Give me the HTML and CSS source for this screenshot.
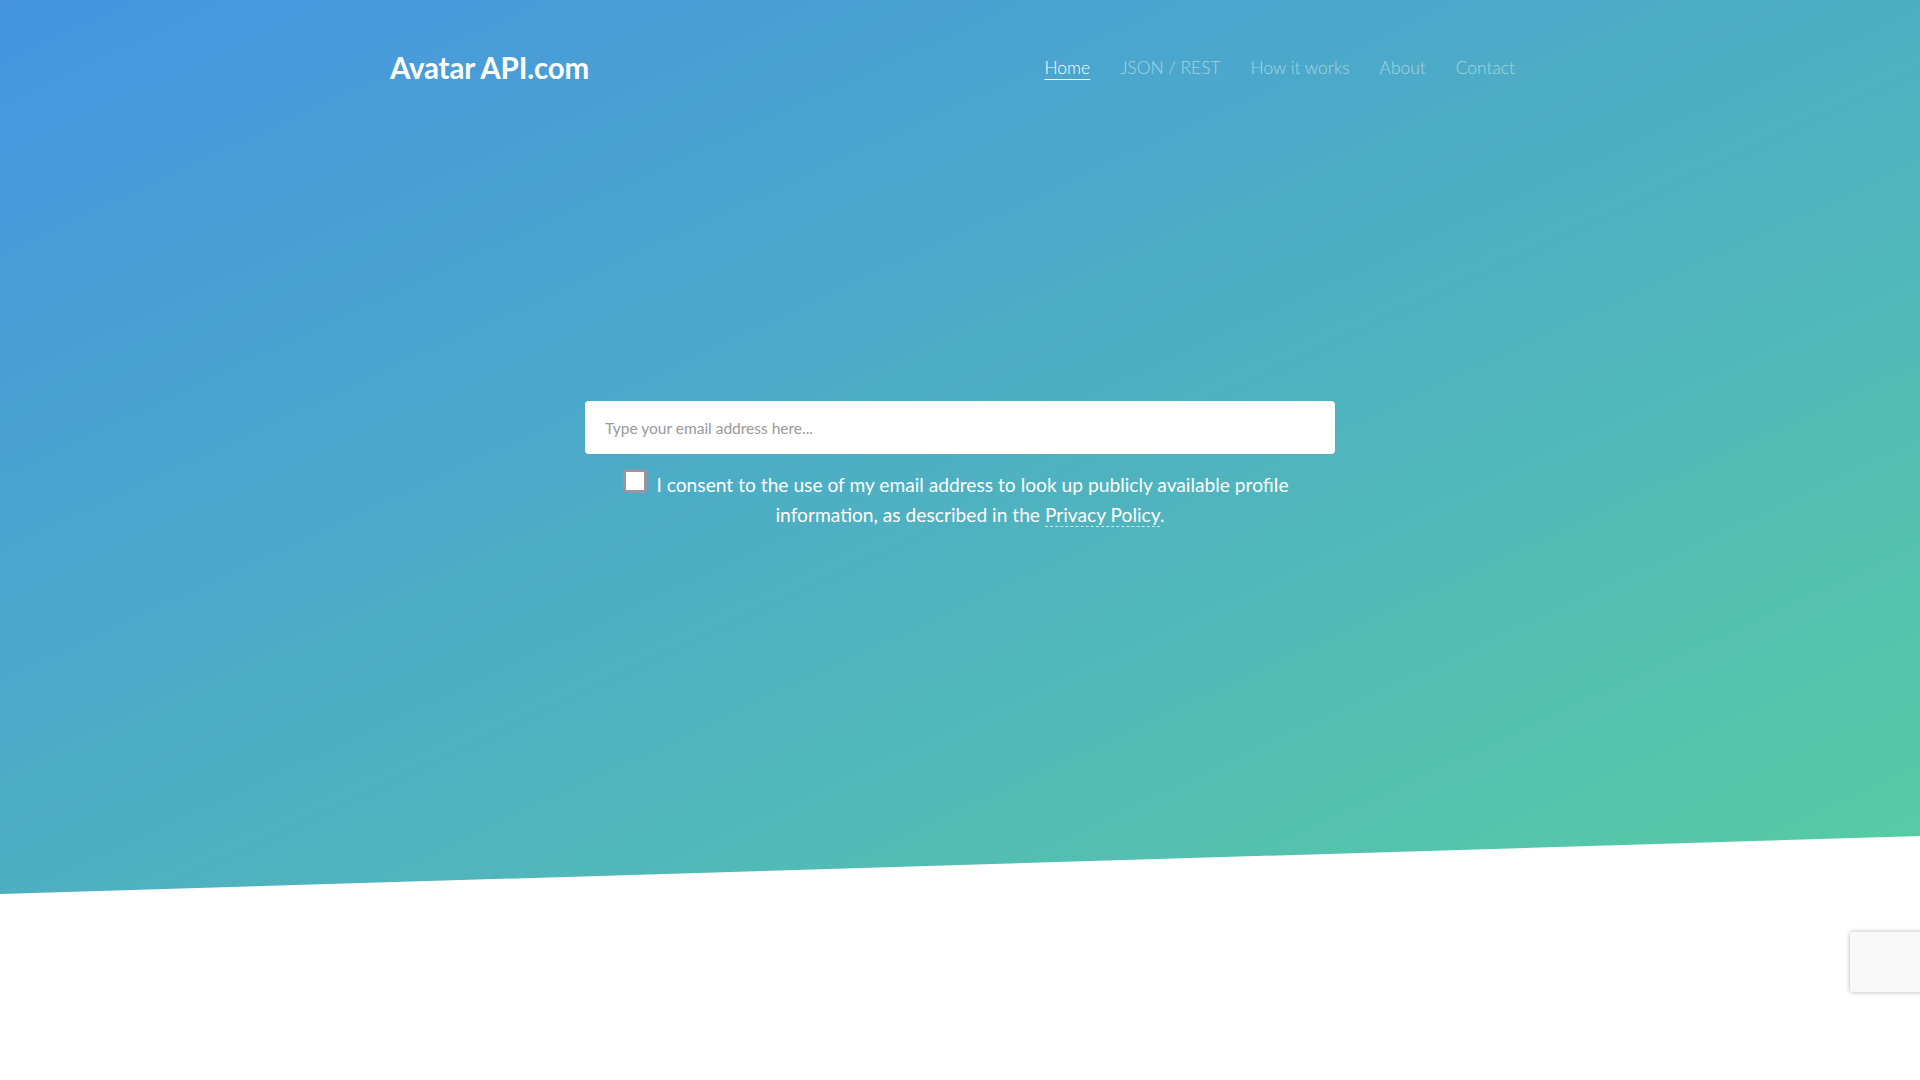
FILE: index.html
```html
<!DOCTYPE html>
<html lang="en">
<head>
<meta charset="utf-8">
<title>Avatar API.com</title>
<link rel="stylesheet" href="styles.css">
</head>
<body>
<section class="hero">
  <div class="container">
    <header class="header">
      <a class="logo" href="#">Avatar API.com</a>
      <nav class="nav">
        <a class="nav-link active" href="#">Home</a>
        <a class="nav-link" href="#">JSON / REST</a>
        <a class="nav-link" href="#">How it works</a>
        <a class="nav-link" href="#">About</a>
        <a class="nav-link" href="#">Contact</a>
      </nav>
    </header>
    <form class="search">
      <input class="email" type="text" placeholder="Type your email address here...">
      <p class="consent"><span class="checkbox"></span>I consent to the use of my email address to look up publicly available profile information, as described in the <a class="policy" href="#">Privacy Policy</a>.</p>
    </form>
  </div>
</section>
<div class="recaptcha"></div>
</body>
</html>
```
FILE: styles.css
```css
html, body {
  margin: 0;
  padding: 0;
  background: #fff;
  overflow: hidden;
}
body {
  font-family: "Lato", "Liberation Sans", sans-serif;
  height: 1080px;
}
.hero {
  height: 894px;
  background: linear-gradient(to bottom right, #4694e1 0%, #4eafc3 50%, #57cda2 100%);
  clip-path: polygon(0 0, 100% 0, 100% 836px, 0 100%);
}
.container {
  width: 1140px;
  margin: 0 auto;
}
.header {
  height: 134px;
  display: flex;
  align-items: center;
  justify-content: space-between;
}
.logo {
  color: #fff;
  font-weight: 700;
  font-size: 29.5px;
  text-decoration: none;
  letter-spacing: -0.2px;
}
.nav {
  display: flex;
}
.nav-link {
  padding: 0 15px;
  font-size: 17.4px;
  font-weight: 300;
  color: rgba(255, 255, 255, 0.5);
  text-decoration: none;
}
.nav-link.active {
  color: #fff;
  text-decoration: underline;
  text-underline-offset: 5px;
  text-decoration-thickness: 1px;
}
.search {
  width: 750px;
  margin: 267px auto 0;
}
.email {
  display: block;
  box-sizing: border-box;
  width: 100%;
  height: 53px;
  border: none;
  border-radius: 4px;
  padding: 0 20px;
  font-family: "Lato", "Liberation Sans", sans-serif;
  font-size: 15.5px;
  color: #555;
  outline: none;
}
.email::placeholder {
  color: #999;
}
.consent {
  margin: 15px 0 0;
  padding-left: 20px;
  text-indent: -28px;
  text-align: center;
  color: #fff;
  font-size: 19.2px;
  line-height: 30px;
}
.checkbox {
  display: inline-block;
  box-sizing: border-box;
  width: 24px;
  height: 24px;
  margin-right: 9px;
  vertical-align: -1px;
  background: #fff;
  border: 3px solid #9a95a3;
  border-radius: 3px;
}
.policy {
  color: #fff;
  text-decoration: none;
  border-bottom: 1px dashed rgba(255, 255, 255, 0.7);
}
.recaptcha {
  position: fixed;
  right: -186px;
  top: 932px;
  width: 256px;
  height: 60px;
  background: #f9f9f9;
  border-radius: 3px;
  box-shadow: 0 0 5px rgba(0, 0, 0, 0.3);
}
```
